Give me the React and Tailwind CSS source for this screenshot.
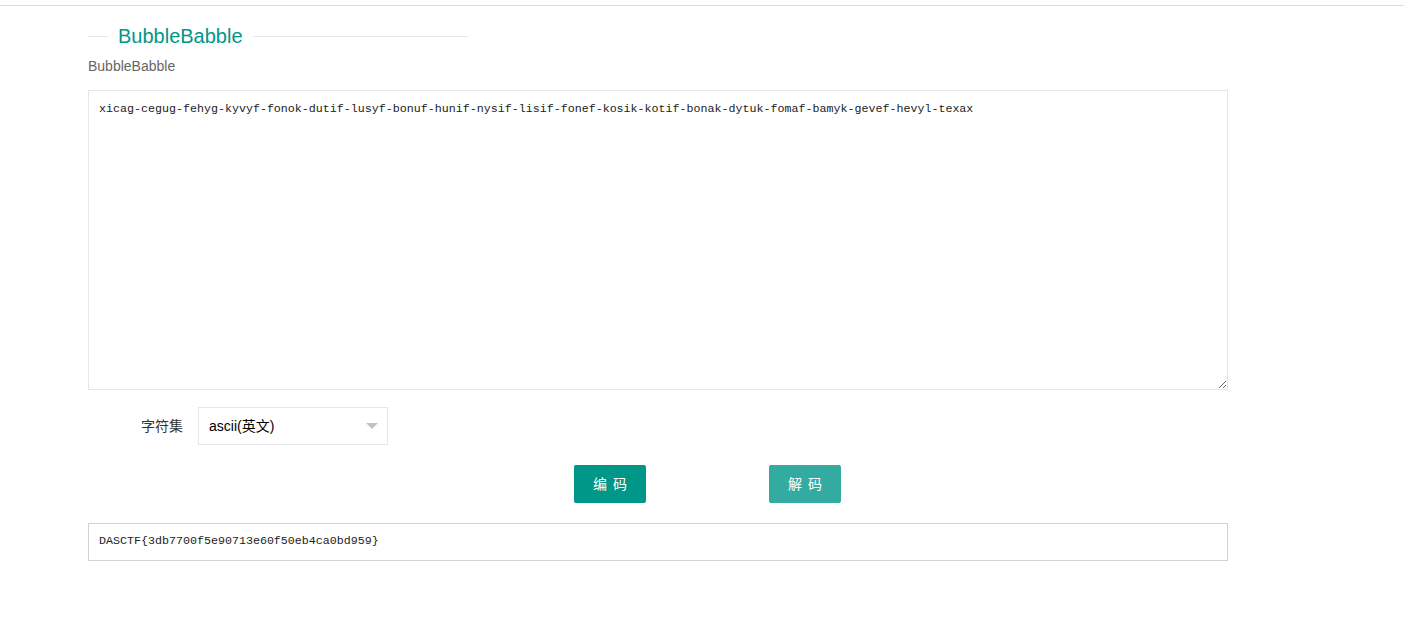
import { useState } from 'react';

const INPUT =
  'xicag-cegug-fehyg-kyvyf-fonok-dutif-lusyf-bonuf-hunif-nysif-lisif-fonef-kosik-kotif-bonak-dytuk-fomaf-bamyk-gevef-hevyl-texax';

const App = () => {
  const [text, setText] = useState(INPUT);
  const [charset, setCharset] = useState('ascii');
  const [result] = useState('DASCTF{3db7700f5e90713e60f50eb4ca0bd959}');

  return (
    <div className="min-h-[626px] bg-white font-['Liberation_Sans','Noto_Sans_CJK_SC',sans-serif]">
      <div className="h-[6px] border-b border-[#dcdcdc]"></div>

      <div className="ml-[88px] w-[1140px]">
        {/* section title */}
        <div className="flex items-center w-[380px] mt-[18px] h-[24px]">
          <span className="w-[20px] border-t border-[#e6e6e6]"></span>
          <h2 className="px-[10px] text-[20px] leading-[24px] text-[#009688] font-normal">BubbleBabble</h2>
          <span className="flex-1 border-t border-[#e6e6e6]"></span>
        </div>
        <p className="mt-[10px] text-[14px] leading-[16px] text-[#666]">BubbleBabble</p>

        <textarea
          value={text}
          onChange={(e) => setText(e.target.value)}
          className="block mt-[16px] w-full h-[300px] border border-[#e6e6e6] px-[10px] py-[9px] text-[11.67px] leading-[18px] text-[#222] font-['Liberation_Mono',monospace] outline-none resize-y"
        />

        <div className="flex items-center mt-[17px]">
          <label className="w-[110px] pr-[15px] text-right text-[14px] text-[#333]">字符集</label>
          <div className="relative w-[190px] h-[38px]">
            <select
              value={charset}
              onChange={(e) => setCharset(e.target.value)}
              className="appearance-none w-full h-full border border-[#e6e6e6] pl-[10px] pr-[30px] text-[14px] text-black bg-white outline-none"
            >
              <option value="ascii">ascii(英文)</option>
              <option value="utf8">utf-8(中文)</option>
              <option value="gbk">gbk(中文)</option>
            </select>
            <span className="absolute right-[10px] top-[16px] w-0 h-0 border-x-[6px] border-x-transparent border-t-[6px] border-t-[#c2c2c2] pointer-events-none"></span>
          </div>
        </div>

        <div className="flex mt-[20px] pl-[486px] gap-[123px]">
          <button className="w-[72px] h-[38px] rounded-[2px] bg-[#009688] text-white text-[14px] tracking-[6px] pl-[6px]">编码</button>
          <button className="w-[72px] h-[38px] rounded-[2px] bg-[#33aba0] text-white text-[14px] tracking-[6px] pl-[6px]">解码</button>
        </div>

        <div className="mt-[20px] h-[38px] border border-[#d2d2d2] flex items-center px-[10px] text-[11.67px] text-[#222] font-['Liberation_Mono',monospace]">
          {result}
        </div>
      </div>
    </div>
  );
};

export default App;
